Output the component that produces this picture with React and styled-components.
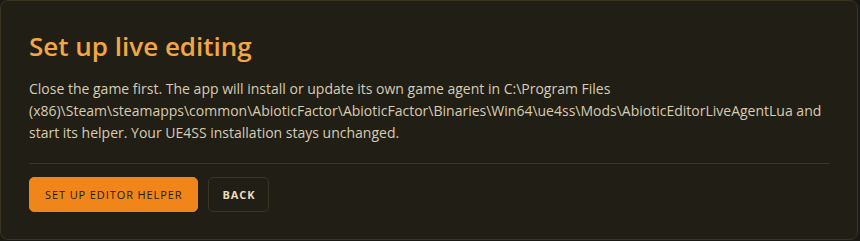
import React from "react";
import styled, { createGlobalStyle } from "styled-components";

const Global = createGlobalStyle`
  html, body {
    margin: 0;
    background: #1b1913;
  }
  body {
    font-family: "Open Sans", "Noto Sans", sans-serif;
  }
`;

const Panel = styled.section`
  box-sizing: border-box;
  width: 858px;
  height: 240px;
  background: #211e16;
  border: 1px solid #3a3322;
  border-radius: 8px;
  padding: 27px 28px 0 28px;
`;

const Title = styled.h2`
  margin: 0;
  font-size: 26px;
  font-weight: 600;
  line-height: 36px;
  color: #f3a642;
`;

const Body = styled.p`
  margin: 14px 0 0;
  font-size: 14px;
  line-height: 22px;
  color: #d8ccb3;
`;

const Divider = styled.hr`
  margin: 19px 0 13px;
  border: 0;
  border-top: 1px solid #3d3620;
`;

const Actions = styled.div`
  display: flex;
  gap: 10px;
`;

const Button = styled.button`
  box-sizing: border-box;
  height: 35px;
  padding: 0 ${(p) => (p.$primary ? "15px" : "13px")};
  border-radius: 5px;
  border: 1px solid ${(p) => (p.$primary ? "#f0861a" : "#3b3424")};
  background: ${(p) => (p.$primary ? "#f0861a" : "transparent")};
  color: ${(p) => (p.$primary ? "#1e1a12" : "#e8dcc0")};
  font-family: "Open Sans", "Noto Sans", sans-serif;
  font-size: 11px;
  font-weight: ${(p) => (p.$primary ? 500 : 700)};
  letter-spacing: 0.9px;
  text-transform: uppercase;
  cursor: pointer;
`;

export default function App() {
  return (
    <>
      <Global />
      <Panel>
        <Title>Set up live editing</Title>
        <Body>
          Close the game first. The app will install or update its own game agent in C:\Program Files
          (x86)\Steam\steamapps\common\AbioticFactor\AbioticFactor\Binaries\Win64\ue4ss\Mods\AbioticEditorLiveAgentLua and
          start its helper. Your UE4SS installation stays unchanged.
        </Body>
        <Divider />
        <Actions>
          <Button $primary>Set up editor helper</Button>
          <Button>Back</Button>
        </Actions>
      </Panel>
    </>
  );
}
